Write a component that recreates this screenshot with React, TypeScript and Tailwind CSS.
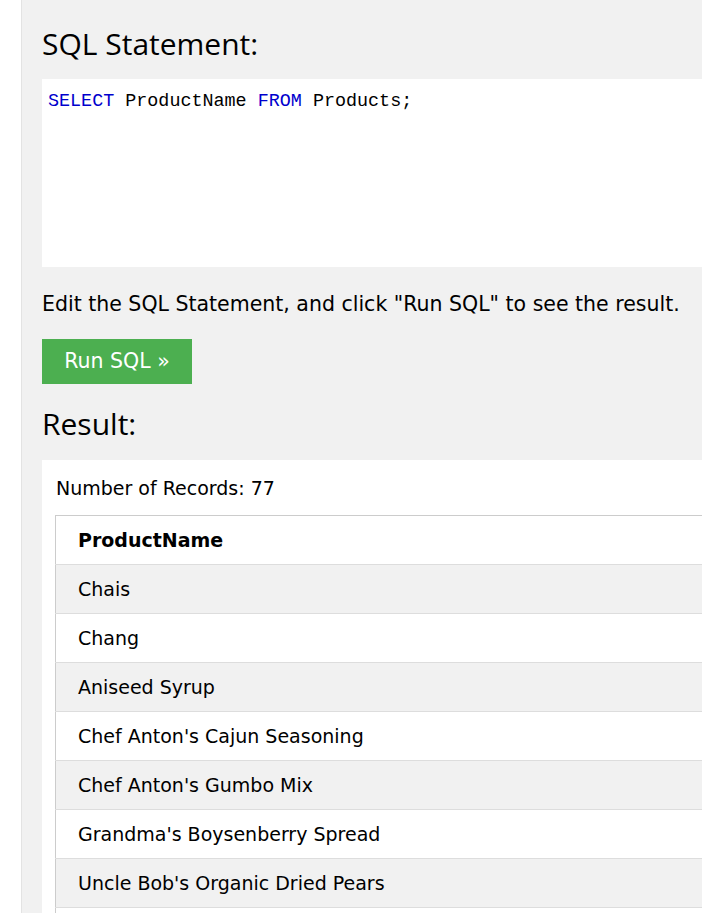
import React from "react";

const rows = [
  "Chais",
  "Chang",
  "Aniseed Syrup",
  "Chef Anton's Cajun Seasoning",
  "Chef Anton's Gumbo Mix",
  "Grandma's Boysenberry Spread",
  "Uncle Bob's Organic Dried Pears",
  "",
];

export default function App() {
  return (
    <div className="flex w-[702px] h-[913px] overflow-hidden bg-white">
      <div className="w-[22px] shrink-0 bg-white border-r border-[#e3e3e3]" />
      <div className="flex-1 bg-[#f1f1f1] pl-[20px] pt-[24px] overflow-hidden" style={{ fontFamily: '"DejaVu Sans", Verdana, sans-serif' }}>
        <div className="w-[700px]">
          <h2 className="text-[30px] leading-[40px] text-black font-normal" style={{ fontFamily: '"Open Sans", "Segoe UI", sans-serif' }}>
            SQL Statement:
          </h2>
          <div className="mt-[15px] bg-white h-[188px] pl-[6px] pt-[9px] text-[18.4px] leading-[28px]" style={{ fontFamily: '"Liberation Mono", Consolas, monospace' }}>
            <span className="text-[#0000cd]">SELECT</span> ProductName <span className="text-[#0000cd]">FROM</span> Products;
          </div>
          <p className="mt-[23px] text-[20.5px] leading-[28px] text-black">Edit the SQL Statement, and click "Run SQL" to see the result.</p>
          <button className="mt-[21px] w-[150px] h-[45px] bg-[#4caf50] text-white text-[20.5px] flex items-center justify-center">
            Run SQL »
          </button>
          <h2 className="mt-[20px] text-[30px] leading-[40px] text-black font-normal" style={{ fontFamily: '"Open Sans", "Segoe UI", sans-serif' }}>
            Result:
          </h2>
          <div className="mt-[16px] bg-white pl-[13px] pt-[14px] pb-[20px]">
            <div className="text-[19px] leading-[28px] text-black pl-[1px]">Number of Records: 77</div>
            <table className="mt-[13px] w-full border border-[#cccccc] border-collapse text-[19px] text-black">
              <thead>
                <tr className="bg-white">
                  <th className="h-[49px] text-left font-bold pl-[22px]">ProductName</th>
                </tr>
              </thead>
              <tbody>
                {rows.map((r, i) => (
                  <tr key={i} className={`border-t border-[#dddddd] ${i % 2 === 0 ? "bg-[#f1f1f1]" : "bg-white"}`}>
                    <td className="h-[49px] pl-[22px]">{r}</td>
                  </tr>
                ))}
              </tbody>
            </table>
          </div>
        </div>
      </div>
    </div>
  );
}
